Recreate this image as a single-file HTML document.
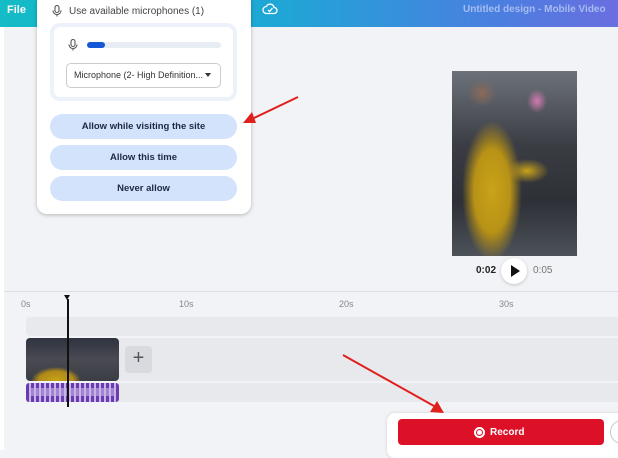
<!DOCTYPE html>
<html><head><style>
*{margin:0;padding:0;box-sizing:border-box}
body{width:618px;height:450px;overflow:hidden;background:#f2f3f6;font-family:"Liberation Sans",sans-serif;position:relative}
.abs{position:absolute}
.hdr{left:0;top:0;width:618px;height:27px;background:linear-gradient(90deg,#13bcc6 0%,#1fa6d6 45%,#4a7fe0 80%,#6a6ee0 100%)}
.strip{left:0;top:27px;width:4px;height:423px;background:#fff}
.pop{left:37px;top:-8px;width:214px;height:222px;background:#fff;border-radius:10px;box-shadow:0 1px 4px rgba(0,0,0,.25)}
.btn{position:absolute;left:50px;width:187px;height:25px;border-radius:13px;background:#d3e3fb;color:#1f2a44;font-size:9.5px;font-weight:bold;text-align:center;line-height:25px}
.row{background:#e8e9ec}
.lbl{font-size:9px;color:#888;top:299px}
</style></head><body>
<div class="abs hdr"></div>
<div class="abs" style="left:7px;top:4px;color:#fff;font-weight:bold;font-size:11px">File</div>
<svg class="abs" style="left:262px;top:1px" width="16" height="16" viewBox="0 0 16 16"><path d="M4.5 12.5h7.5a3 3 0 0 0 0-6 4 4 0 0 0-7.6-1A3.3 3.3 0 0 0 4.5 12.5z" fill="none" stroke="#fff" stroke-width="1.3"/><path d="M6 9l1.6 1.5L10.5 7" fill="none" stroke="#fff" stroke-width="1.3"/></svg>
<div class="abs" style="left:463px;top:4px;color:#a7bcf0;font-weight:bold;font-size:10px">Untitled design - Mobile Video</div>
<div class="abs strip"></div>

<div class="abs pop"></div>
<svg class="abs" style="left:52px;top:5px" width="10" height="12" viewBox="0 0 10 12"><rect x="3" y="0.5" width="4" height="7" rx="2" fill="none" stroke="#555" stroke-width="1.1"/><path d="M1 5.5a4 4 0 0 0 8 0M5 9.5v2" fill="none" stroke="#555" stroke-width="1.1"/></svg>
<div class="abs" style="left:69px;top:6px;font-size:10px;color:#444">Use available microphones (1)</div>
<div class="abs" style="left:50px;top:23px;width:187px;height:78px;border-radius:10px;background:#fff;border:4px solid #ecf1fa"></div>
<svg class="abs" style="left:68px;top:39px" width="10" height="12" viewBox="0 0 10 12"><rect x="3" y="0.5" width="4" height="7" rx="2" fill="none" stroke="#555" stroke-width="1.1"/><path d="M1 5.5a4 4 0 0 0 8 0M5 9.5v2" fill="none" stroke="#555" stroke-width="1.1"/></svg>
<div class="abs" style="left:87px;top:42px;width:134px;height:6px;border-radius:3px;background:#e8ecf3"></div>
<div class="abs" style="left:87px;top:42px;width:18px;height:6px;border-radius:3px;background:#1558d6"></div>
<div class="abs" style="left:66px;top:63px;width:155px;height:25px;border:1px solid #ccc;border-radius:5px;font-size:9px;color:#333;line-height:23px;padding-left:7px">Microphone (2- High Definition...</div>
<div class="abs" style="left:205px;top:73px;width:0;height:0;border-left:3.5px solid transparent;border-right:3.5px solid transparent;border-top:4px solid #333"></div>
<div class="btn" style="top:114px">Allow while visiting the site</div>
<div class="btn" style="top:145px">Allow this time</div>
<div class="btn" style="top:176px">Never allow</div>

<div class="abs" style="left:452px;top:71px;width:125px;height:185px;background:
radial-gradient(ellipse 30px 70px at 40px 120px,#c9a318 0%,#b89216 60%,transparent 100%),
radial-gradient(ellipse 22px 12px at 75px 100px,#c9a318 0%,transparent 100%),
radial-gradient(ellipse 10px 12px at 85px 30px,#d47ab0 0%,transparent 100%),
radial-gradient(ellipse 14px 14px at 30px 22px,#8a6a58 0%,transparent 100%),
linear-gradient(180deg,#6d727a 0%,#3b3d44 40%,#2d3036 70%,#4d5259 100%)"></div>
<div class="abs" style="left:476px;top:265px;font-size:10px;font-weight:bold;color:#222">0:02</div>
<div class="abs" style="left:501px;top:258px;width:26px;height:26px;border-radius:50%;background:#fff;box-shadow:0 1px 3px rgba(0,0,0,.2)"></div>
<div class="abs" style="left:511px;top:265px;width:0;height:0;border-top:6px solid transparent;border-bottom:6px solid transparent;border-left:9px solid #111"></div>
<div class="abs" style="left:533px;top:265px;font-size:10px;color:#777">0:05</div>

<div class="abs" style="left:4px;top:291px;width:614px;height:1px;background:#dcdde2"></div>
<div class="abs lbl" style="left:21px">0s</div>
<div class="abs lbl" style="left:179px">10s</div>
<div class="abs lbl" style="left:339px">20s</div>
<div class="abs lbl" style="left:499px">30s</div>
<div class="abs row" style="left:26px;top:317px;width:592px;height:19px;border-radius:4px 0 0 4px"></div>
<div class="abs row" style="left:26px;top:338px;width:592px;height:43px"></div>
<div class="abs row" style="left:26px;top:383px;width:592px;height:19px"></div>
<div class="abs" style="left:26px;top:338px;width:93px;height:43px;border-radius:4px;background:
radial-gradient(ellipse 25px 14px at 30px 43px,#c9a318 0%,#b08a18 70%,transparent 100%),
linear-gradient(180deg,#2e3340 0%,#4a4a52 50%,#3a3d44 100%)"></div>
<div class="abs" style="left:125px;top:346px;width:27px;height:27px;border-radius:4px;background:#d9dadf;color:#555;font-size:20px;text-align:center;line-height:25px">+</div>
<div class="abs" style="left:26px;top:383px;width:93px;height:19px;border-radius:3px;background:repeating-linear-gradient(90deg,#6a3cb0 0 3px,#c8b4e8 3px 5px)"></div>
<div class="abs" style="left:30px;top:388px;width:86px;height:8px;background:#c8b4e8;opacity:.6"></div>
<div class="abs" style="left:64px;top:295px;width:0;height:0;border-left:3.5px solid transparent;border-right:3.5px solid transparent;border-top:5px solid #111"></div>
<div class="abs" style="left:67px;top:299px;width:1.5px;height:108px;background:#111"></div>

<div class="abs" style="left:387px;top:413px;width:240px;height:45px;background:#fff;border-radius:8px;box-shadow:0 0 3px rgba(0,0,0,.15)"></div>
<div class="abs" style="left:398px;top:419px;width:206px;height:26px;background:#dc1128;border-radius:4px"></div>
<div class="abs" style="left:474px;top:427px;width:11px;height:11px;border-radius:50%;border:2px solid #fff"></div>
<div class="abs" style="left:477px;top:430px;width:5px;height:5px;border-radius:50%;background:#fff"></div>
<div class="abs" style="left:490px;top:427px;font-size:10px;font-weight:bold;color:#fff">Record</div>
<div class="abs" style="left:610px;top:420px;width:24px;height:24px;border-radius:50%;border:1px solid #ccc;background:#fff"></div>

<svg class="abs" style="left:0;top:0" width="618" height="450">
<line x1="298" y1="97" x2="252" y2="119" stroke="#e0201c" stroke-width="2"/>
<polygon points="243,123 252,112 256,123" fill="#e0201c"/>
<line x1="343" y1="355" x2="434" y2="406" stroke="#e0201c" stroke-width="2"/>
<polygon points="444,413 430,412 437,401" fill="#e0201c"/>
</svg>
</body></html>
